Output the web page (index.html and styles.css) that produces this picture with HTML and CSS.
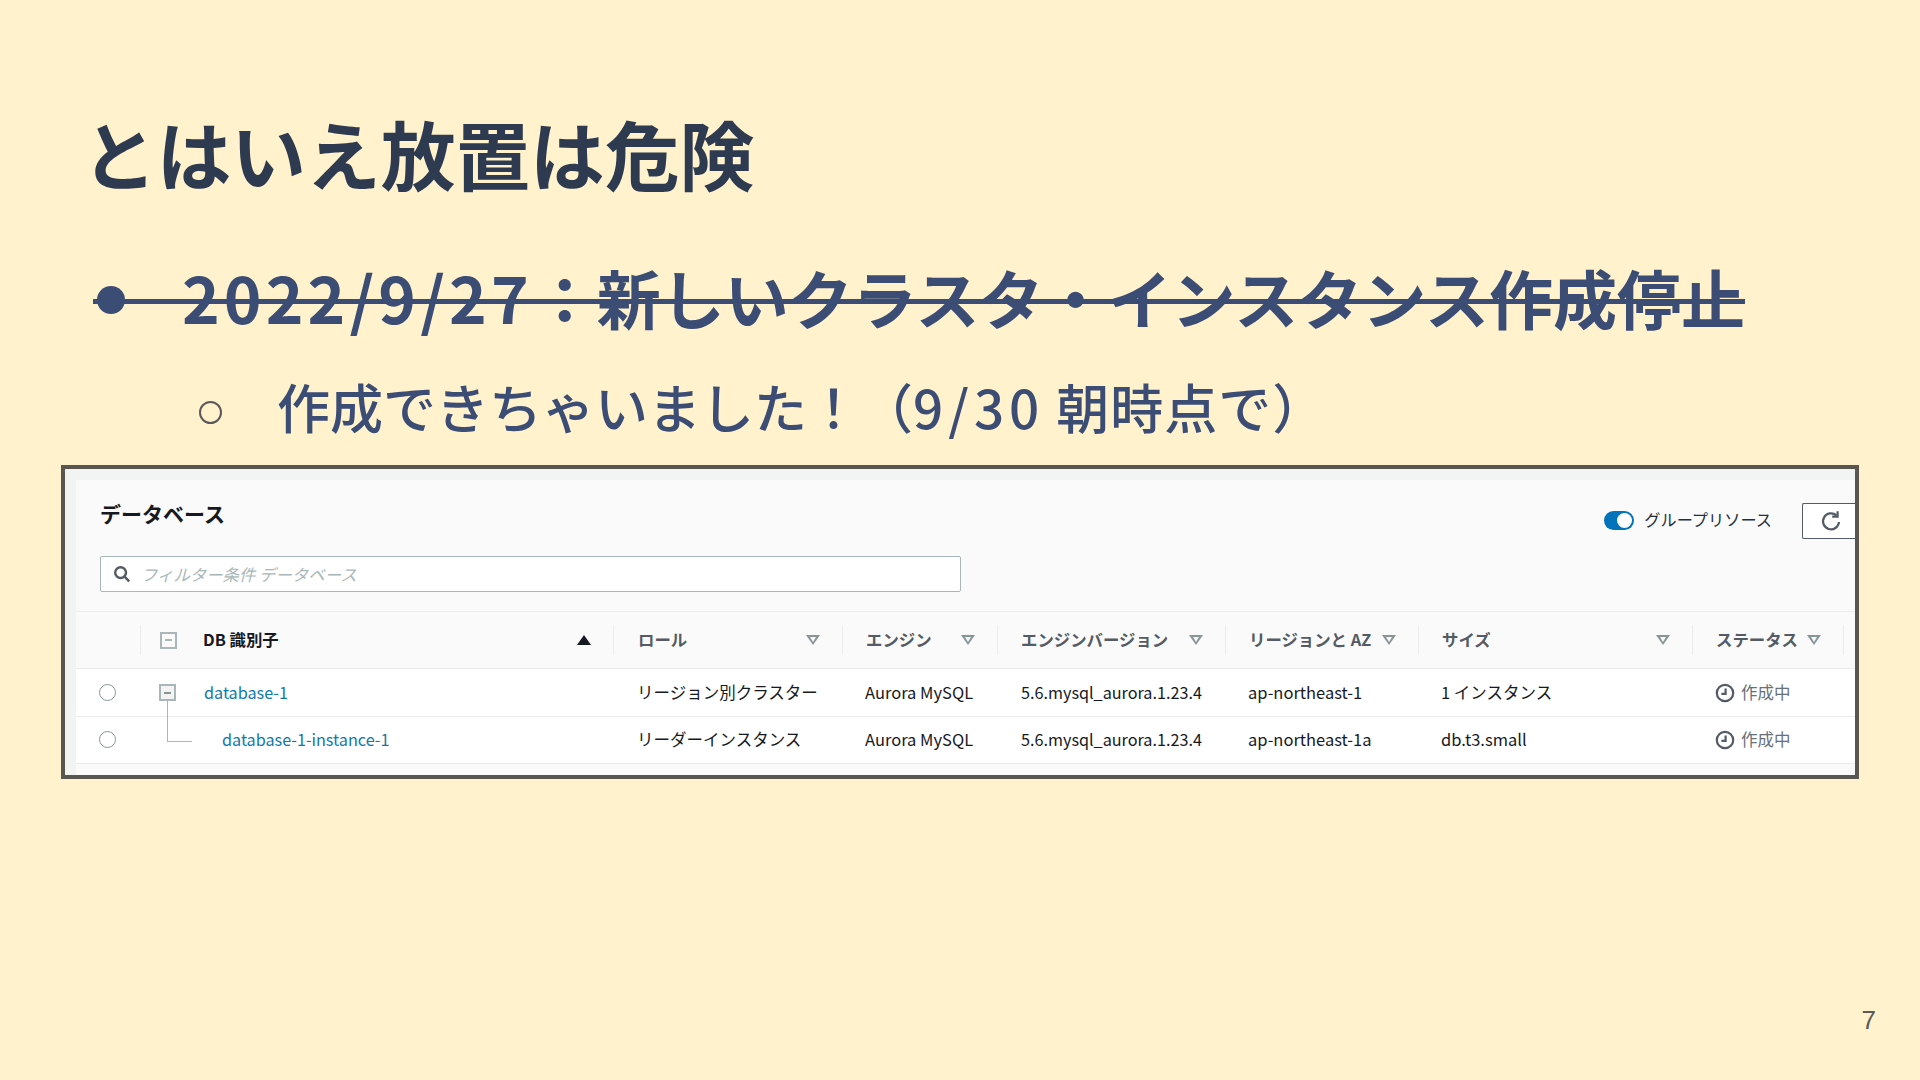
FILE: index.html
```html
<!DOCTYPE html>
<html lang="ja">
<head>
<meta charset="utf-8">
<title>とはいえ放置は危険</title>
<link rel="stylesheet" href="styles.css">
</head>
<body>
<main class="slide">
  <h1 class="title">とはいえ放置は危険</h1>
  <div class="point struck">
    <span class="dot"></span>
    <span class="point-text"><span class="latin">2022/9/27</span>&#xFF1A;新しいクラスタ・インスタンス作成停止</span>
  </div>
  <div class="subpoint">
    <span class="ring"></span>
    <span class="sub-text">作成できちゃいました&#xFF01;&#xFF08;<span class="latin-sub">9/30</span> <span class="tail">朝時点で&#xFF09;</span></span>
  </div>
  <section class="shot">
    <div class="panel">
      <div class="panel-head">
        <div class="panel-title">データベース</div>
        <div class="tools">
          <span class="toggle"><span class="knob"></span></span>
          <span class="toggle-label">グループリソース</span>
          <span class="refresh">
            <svg width="24" height="24" viewBox="0 0 24 24" fill="none" stroke="#545b64" stroke-width="2.2"><path d="M20 13a8 8 0 1 1-2.6-6.6"/><path d="M18.6 2.2v5.4h-5.4" stroke-width="2.2"/></svg>
          </span>
        </div>
      </div>
      <div class="search-row">
        <div class="search">
          <svg width="18" height="18" viewBox="0 0 18 18" fill="none" stroke="#545b64" stroke-width="2.4"><circle cx="7.6" cy="7.6" r="5.4"/><path d="M11.6 11.6l4.6 4.8"/></svg>
          <span class="placeholder">フィルター条件 データベース</span>
        </div>
      </div>
      <div class="table">
        <div class="row head">
          <div class="cell cell-radio"></div>
          <div class="cell cell-sep cell-id">
            <span class="check"><span class="minus"></span></span>
            <span class="th-strong">DB 識別子</span>
            <span class="sort-up"></span>
          </div>
          <div class="cell cell-sep cell-role"><span class="th">ロール</span><span class="filter"></span></div>
          <div class="cell cell-sep"><span class="th">エンジン</span><span class="filter"></span></div>
          <div class="cell cell-sep"><span class="th">エンジンバージョン</span><span class="filter"></span></div>
          <div class="cell cell-sep"><span class="th">リージョンと AZ</span><span class="filter"></span></div>
          <div class="cell cell-sep"><span class="th">サイズ</span><span class="filter"></span></div>
          <div class="cell cell-sep"><span class="th">ステータス</span><span class="filter"></span></div>
          <div class="cell cell-sep"></div>
        </div>
        <div class="row body">
          <div class="cell cell-radio"><span class="radio"></span></div>
          <div class="cell cell-id cell-id-body">
            <span class="check check-dark"><span class="minus"></span><span class="tree"></span></span>
            <a class="link">database-1</a>
          </div>
          <div class="cell cell-role"><span class="txt">リージョン別クラスター</span></div>
          <div class="cell"><span class="txt">Aurora MySQL</span></div>
          <div class="cell cell-ver"><span class="txt">5.6.mysql_aurora.1.23.4</span></div>
          <div class="cell"><span class="txt">ap-northeast-1</span></div>
          <div class="cell"><span class="txt">1 インスタンス</span></div>
          <div class="cell status">
            <svg width="20" height="20" viewBox="0 0 20 20" fill="none" stroke="#545b64" stroke-width="2.2"><circle cx="10" cy="10" r="8.2"/><path d="M10.6 5.6v5.2H6.4"/></svg>
            <span class="txt">作成中</span>
          </div>
          <div class="cell"></div>
        </div>
        <div class="row body">
          <div class="cell cell-radio"><span class="radio"></span></div>
          <div class="cell cell-child"><a class="link link-child">database-1-instance-1</a></div>
          <div class="cell cell-role"><span class="txt">リーダーインスタンス</span></div>
          <div class="cell"><span class="txt">Aurora MySQL</span></div>
          <div class="cell cell-ver"><span class="txt">5.6.mysql_aurora.1.23.4</span></div>
          <div class="cell"><span class="txt">ap-northeast-1a</span></div>
          <div class="cell"><span class="txt">db.t3.small</span></div>
          <div class="cell status">
            <svg width="20" height="20" viewBox="0 0 20 20" fill="none" stroke="#545b64" stroke-width="2.2"><circle cx="10" cy="10" r="8.2"/><path d="M10.6 5.6v5.2H6.4"/></svg>
            <span class="txt">作成中</span>
          </div>
          <div class="cell"></div>
        </div>
      </div>
    </div>
  </section>
  <footer class="page-no">7</footer>
</main>
</body>
</html>
```
FILE: styles.css
```css
* { box-sizing: border-box; }
html, body { margin: 0; padding: 0; }
body {
  width: 1920px;
  height: 1080px;
  overflow: hidden;
  background: #fff2cc;
  font-family: "Noto Sans CJK JP", "Noto Sans", sans-serif;
}
.slide {
  position: relative;
  width: 1920px;
  height: 1080px;
  padding: 103px 0 0 61px;
}
.title {
  height: 100px;
  margin: 0 0 61px 21px;
  font-size: 74.7px;
  line-height: 100px;
  font-weight: 700;
  color: #2d3a50;
}
.point {
  position: relative;
  display: flex;
  align-items: center;
  width: 1652px;
  height: 72px;
  margin: 0 0 0 32px;
  color: #3c4d75;
}
.struck::after {
  content: "";
  position: absolute;
  left: 0;
  right: 0;
  top: 35px;
  height: 5px;
  background: #3c4d75;
}
.dot {
  width: 28px;
  height: 28px;
  margin: 0 0 0 4px;
  border-radius: 50%;
  background: #3c4d75;
  flex: none;
}
.point-text {
  margin: 0 0 8px 57px;
  font-size: 64px;
  line-height: 72px;
  font-weight: 700;
  white-space: nowrap;
}
.latin { letter-spacing: 4.1px; }
.subpoint {
  display: flex;
  align-items: center;
  height: 72px;
  margin: 34px 0 0 138px;
  color: #3c4d75;
}
.ring {
  width: 23px;
  height: 23px;
  margin-top: 13px;
  border: 2px solid #595959;
  border-radius: 50%;
  flex: none;
}
.sub-text {
  margin-left: 55px;
  font-size: 53px;
  line-height: 72px;
  font-weight: 500;
  white-space: nowrap;
}
.latin-sub { letter-spacing: 5px; }
.tail { letter-spacing: 1px; }
.shot {
  width: 1798px;
  height: 314px;
  margin-top: 23px;
  border: 4px solid #595652;
  background: #f2f3f3;
  padding: 11px 0 0 11px;
  overflow: hidden;
}
.panel {
  height: 100%;
  background: #fafafa;
  color: #16191f;
}
.panel-head {
  display: flex;
  justify-content: space-between;
  height: 74px;
  padding: 17px 0 0 24px;
}
.panel-title {
  font-size: 21px;
  line-height: 32px;
  font-weight: 700;
}
.tools {
  display: flex;
  align-items: flex-start;
}
.toggle {
  position: relative;
  width: 30px;
  height: 19px;
  margin-top: 14px;
  border-radius: 10px;
  background: #0073bb;
}
.knob {
  position: absolute;
  right: 2px;
  top: 2px;
  width: 15px;
  height: 15px;
  border-radius: 50%;
  background: #fff;
}
.toggle-label {
  margin: 8px 0 0 10px;
  font-size: 16.2px;
  line-height: 28px;
  color: #232f3e;
  white-space: nowrap;
}
.refresh {
  display: flex;
  align-items: center;
  justify-content: center;
  width: 53px;
  height: 36px;
  margin: 6px 0 0 30px;
  padding-left: 3px;
  border: 1px solid #545b64;
  border-right: 0;
  border-radius: 2px 0 0 2px;
  background: #fff;
}
.search-row {
  height: 57px;
  padding: 2px 0 0 24px;
}
.search {
  display: flex;
  align-items: center;
  gap: 10px;
  width: 861px;
  height: 36px;
  padding-left: 12px;
  background: #fff;
  border: 1px solid #aab7b8;
  border-radius: 2px;
}
.placeholder {
  font-size: 16.4px;
  font-style: italic;
  color: #aab7b8;
}
.table {
  border-top: 1px solid #eaeded;
}
.row {
  display: grid;
  grid-template-columns: 64px 473px 229px 155px 228px 193px 274px 151px 1fr;
  align-items: center;
}
.head {
  height: 57px;
  border-bottom: 1px solid #eaeded;
}
.body {
  height: 48px;
  background: #fff;
  border-bottom: 1px solid #eaeded;
  font-size: 16.5px;
  color: #16191f;
}
.body + .body { height: 47px; }
.cell {
  display: flex;
  align-items: center;
  min-height: 30px;
  padding-left: 23px;
  white-space: nowrap;
}
.txt, .link { margin-bottom: 2px; }
.th, .th-strong { margin-bottom: 3px; }
.cell-role { padding-left: 24px; }
.cell-ver { font-size: 16.2px; padding-left: 24px; }
.cell-sep {
  position: relative;
  justify-content: space-between;
  padding-right: 22px;
  border-left: 1px solid #eaeded;
}
.cell-id {
  justify-content: flex-start;
  padding-left: 19px;
}
.th-strong, .th {
  font-size: 16.4px;
  font-weight: 700;
}
.th-strong { color: #16191f; margin-left: 26px; }
.th { color: #545b64; }
.check {
  position: relative;
  display: flex;
  align-items: center;
  justify-content: center;
  width: 17px;
  height: 17px;
  border: 2px solid #aab7b8;
  background: #fafafa;
  flex: none;
}
.minus {
  width: 7px;
  height: 2px;
  background: #aab7b8;
}
.check-dark { background: #f2f3f3; }
.check-dark .minus { background: #879596; }
.tree {
  position: absolute;
  left: 6px;
  top: 15px;
  width: 25px;
  height: 41px;
  border-left: 1px solid #aab7b8;
  border-bottom: 1px solid #aab7b8;
}
.sort-up {
  width: 0;
  height: 0;
  margin-left: auto;
  border-left: 7px solid transparent;
  border-right: 7px solid transparent;
  border-bottom: 10px solid #16191f;
}
.filter {
  position: relative;
  width: 0;
  height: 0;
  flex: none;
  border-left: 7px solid transparent;
  border-right: 7px solid transparent;
  border-top: 10px solid #879596;
}
.filter::after {
  content: "";
  position: absolute;
  left: -3.5px;
  top: -8px;
  width: 0;
  height: 0;
  border-left: 3.5px solid transparent;
  border-right: 3.5px solid transparent;
  border-top: 5px solid #fafafa;
}
.cell-radio { padding-left: 23px; }
.radio {
  width: 17px;
  height: 17px;
  margin-bottom: 1px;
  border: 1px solid #879596;
  border-radius: 50%;
  background: #fff;
}
.cell-id-body { padding-left: 0; margin-left: 19px; }
.link { color: #0f7aa8; margin-left: 28px; font-size: 16.2px; }
.link-child { margin-left: 0; }
.cell-child { padding-left: 82px; }
.status { gap: 6px; color: #687078; }
.page-no {
  position: absolute;
  right: 44px;
  bottom: 44px;
  font-family: "Liberation Sans", Arial, sans-serif;
  font-size: 26px;
  color: #595959;
}
```
